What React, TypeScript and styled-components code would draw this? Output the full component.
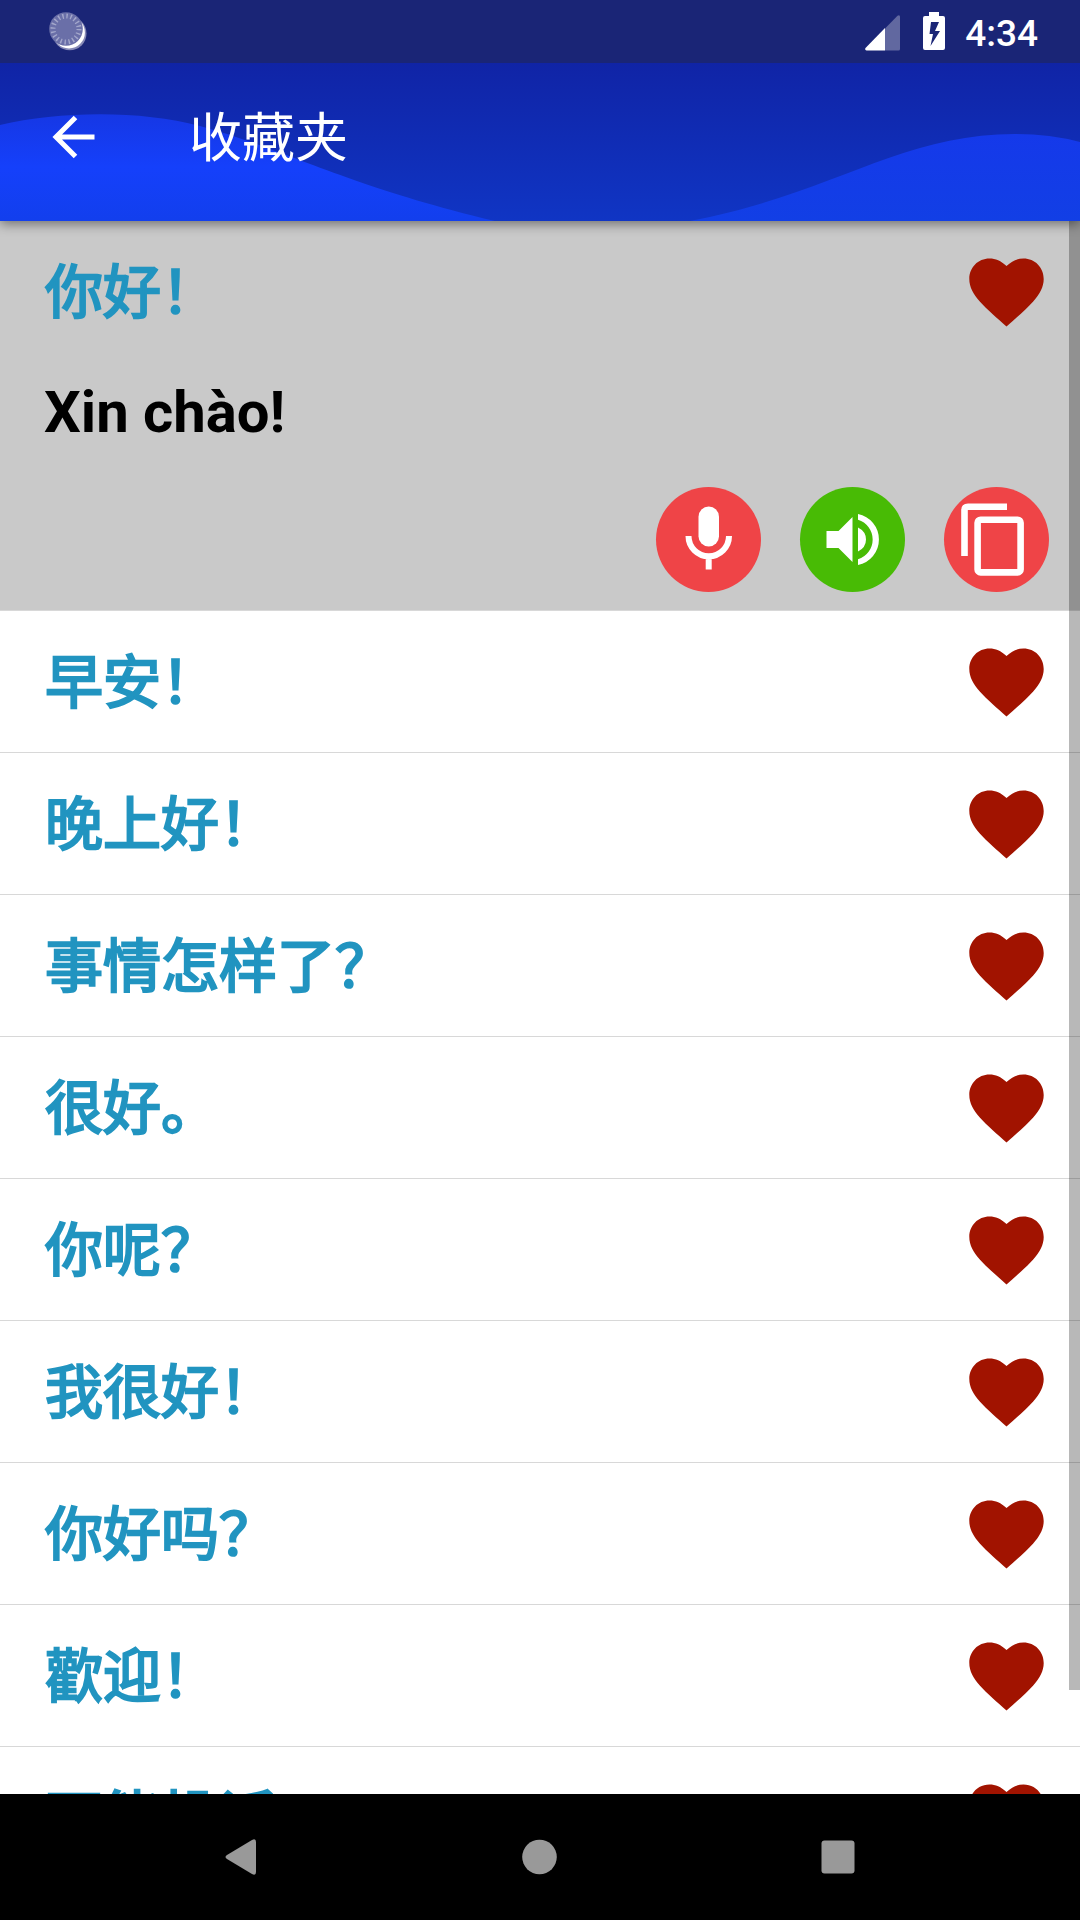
import React from 'react';
import styled, { createGlobalStyle } from 'styled-components';

const Global = createGlobalStyle`
  *, *::before, *::after { box-sizing: border-box; }
  body { margin: 0; background: #fff; }
`;

const cjk = `"Noto Sans CJK SC", sans-serif`;

const Screen = styled.div`
  display: flex;
  flex-direction: column;
  width: 1080px;
  height: 1920px;
  overflow: hidden;
  background: #fff;
  font-family: Roboto, ${cjk};
`;

const StatusBar = styled.header`
  position: relative;
  z-index: 3;
  flex: none;
  display: flex;
  justify-content: space-between;
  height: 63px;
  padding: 0 42px 0 49px;
  background: #1a2576;
`;

const StatusGroup = styled.div`
  display: flex;
  align-items: flex-start;
`;

const Spinner = styled.svg`
  width: 39px;
  height: 40px;
  margin-top: 12px;
`;

const Signal = styled.svg`
  width: 35px;
  height: 36px;
  margin: 15px 23px 0 0;
`;

const Battery = styled.svg`
  width: 22px;
  height: 38px;
  margin: 12px 20px 0 0;
`;

const Clock = styled.span`
  color: #fff;
  font: 500 37px/67px Roboto, sans-serif;
`;

const AppBar = styled.div`
  position: relative;
  z-index: 2;
  flex: none;
  display: flex;
  align-items: center;
  height: 158px;
  padding-left: 52px;
  background: linear-gradient(#1024a6, #1035c4);
  box-shadow: 0 3px 11px rgba(0, 0, 0, 0.45);
`;

const Waves = styled.svg`
  position: absolute;
  inset: 0;
  width: 1080px;
  height: 158px;
`;

const BackButton = styled.button`
  position: relative;
  display: flex;
  width: 44px;
  height: 44px;
  padding: 0;
  margin: -11px 93px 0 0;
  border: 0;
  background: none;
`;

const Title = styled.h1`
  position: relative;
  margin: -16px 0 0;
  color: #fff;
  font: 400 53px/76px ${cjk};
`;

const List = styled.main`
  position: relative;
  flex: 1;
  min-height: 0;
  overflow: hidden;
`;

const Row = styled.section<{ $open?: boolean }>`
  height: ${p => (p.$open ? 390 : 142)}px;
  padding: 0 36px 0 45px;
  background: ${p => (p.$open ? '#c9c9c9' : '#fff')};
  border-bottom: 1px solid #d8d8d8;
`;

const RowHead = styled.div`
  display: flex;
  align-items: center;
  justify-content: space-between;
  height: 141px;
`;

const Phrase = styled.span`
  margin-top: -7px;
  color: #2194c0;
  font: 400 58px/84px ${cjk};
  -webkit-text-stroke: 2.3px #2194c0;
`;

const HeartIcon = styled.svg`
  width: 75px;
  height: 69px;
  margin-top: 1px;
`;

const Translation = styled.p`
  margin: 0 0 0 -1px;
  padding-top: 16px;
  color: #000;
  font: 700 58px/68px Roboto, sans-serif;
`;

const Actions = styled.div`
  display: flex;
  justify-content: flex-end;
  gap: 39px;
  margin: 41px -5px 0 0;
`;

const Round = styled.button<{ $color: string }>`
  width: 105px;
  height: 105px;
  padding: 0;
  border: 0;
  border-radius: 50%;
  background: ${p => p.$color};
  svg { display: block; }
`;

const Scrollbar = styled.div`
  position: absolute;
  top: 0;
  right: 0;
  width: 11px;
  height: 1469px;
  background: rgba(0, 0, 0, 0.28);
`;

const NavBar = styled.nav`
  flex: none;
  height: 126px;
  display: flex;
  align-items: center;
  justify-content: space-between;
  padding: 0 225px;
  background: #000;
`;

const Heart = () => (
  <HeartIcon viewBox="0 0 75 69" fill="#a11300">
    <path d="M37.500 8C32 2.800 26.500 .5 20.500 .5 9 .5 .3 9.500 .3 21c0 8 4 15 10.500 22.500C18 51.500 28.500 60.500 37.500 68.500 46.500 60.500 57 51.500 64.200 43.500 70.700 36 74.700 29 74.700 21 74.700 9.500 66 .5 54.500 .5 48.500 .5 43 2.800 37.500 8Z" />
  </HeartIcon>
);

const phrases = ['早安！', '晚上好！', '事情怎样了？', '很好。', '你呢？', '我很好！', '你好吗？', '歡迎！', '不能投诉。'];

export default function App() {
  return (
    <Screen>
      <Global />
      <StatusBar>
        <StatusGroup>
          <Spinner viewBox="0 0 39 40">
            <circle cx="20.700" cy="21.500" r="16.800" fill="#8689b6" />
            <circle cx="20" cy="20.600" r="15.900" fill="#fff" />
            <circle cx="17" cy="17" r="16.800" fill="#6a6fa8" />
            <circle cx="17" cy="17" r="13" fill="none" stroke="#a3a7cb" strokeWidth="5" strokeDasharray="1.400 2.684" />
          </Spinner>
        </StatusGroup>
        <StatusGroup>
          <Signal viewBox="0 0 35 36">
            <path d="M20 13.500 32.500.8Q35-.5 35 2V34q0 1.500-1.500 1.500H20Z" fill="#6168a0" />
            <path d="M20 13V35.500H1.500Q-.5 35 .5 33Z" fill="#fff" />
          </Signal>
          <Battery viewBox="0 0 22 38">
            <path fill="#fff" fillRule="evenodd" d="M6 0H16V4H20Q22 4 22 6V36Q22 38 20 38H2Q0 38 0 36V6Q0 4 2 4H6ZM8 10 6.500 22H10L7.500 34 17 19H12L16 10Z" />
          </Battery>
          <Clock>4:34</Clock>
        </StatusGroup>
      </StatusBar>
      <AppBar>
        <Waves viewBox="0 0 1080 158">
          <defs>
            <linearGradient id="wave" x1="0" y1="50" x2="0" y2="158" gradientUnits="userSpaceOnUse">
              <stop offset="0" stopColor="#1637e4" />
              <stop offset=".5" stopColor="#1540fb" />
              <stop offset="1" stopColor="#123fed" />
            </linearGradient>
            <linearGradient id="waveRight" x1="0" y1="70" x2="0" y2="158" gradientUnits="userSpaceOnUse">
              <stop offset="0" stopColor="#1539ea" />
              <stop offset="1" stopColor="#123fe5" />
            </linearGradient>
          </defs>
          <path fill="url(#wave)" d="M0 62C60 48 140 47 200 63C290 88 345 122 495 158H0Z" />
          <path fill="url(#waveRight)" d="M690 158C830 132 900 71 1015 71Q1050 71 1080 79V158Z" />
        </Waves>
        <BackButton aria-label="Back">
          <svg width="44" height="44" viewBox="0 0 44 44" fill="none" stroke="#fff" strokeWidth="5">
            <path d="M42.500 22H5M23.500 2.500 4 22 23.500 41.500" />
          </svg>
        </BackButton>
        <Title>收藏夹</Title>
      </AppBar>
      <List>
        <Row $open>
          <RowHead><Phrase>你好！</Phrase><Heart /></RowHead>
          <Translation>Xin chào!</Translation>
          <Actions>
            <Round $color="#ef4447" aria-label="Speak">
              <svg width="105" height="105" viewBox="0 0 105 105">
                <rect x="42.500" y="19.500" width="20.500" height="40" rx="10.250" fill="#fff" />
                <path d="M32.500 49A20.250 20.250 0 0 0 73 49M52.700 69V82.500" fill="none" stroke="#fff" strokeWidth="6" />
              </svg>
            </Round>
            <Round $color="#48bb05" aria-label="Listen">
              <svg width="105" height="105" viewBox="0 0 105 105" fill="#fff">
                <path d="M26.500 44H38.500L52.500 30V75L38.500 61H26.500ZM58 40.500Q66 44.500 66 52.500T58 64.500Z" />
                <path d="M58 27A26 26 0 0 1 58 78V72.300A20.700 20.700 0 0 0 58 32.700Z" />
              </svg>
            </Round>
            <Round $color="#ef4447" aria-label="Copy">
              <svg width="105" height="105" viewBox="0 0 105 105" fill="none" stroke="#fff" strokeWidth="6.600">
                <path d="M63 19.700H24Q20.500 19.700 20.500 23V69" />
                <rect x="33.600" y="32.800" width="43" height="52.600" rx="3" />
              </svg>
            </Round>
          </Actions>
        </Row>
        {phrases.map(p => (
          <Row key={p}><RowHead><Phrase>{p}</Phrase><Heart /></RowHead></Row>
        ))}
        <Scrollbar />
      </List>
      <NavBar>
        <svg width="32" height="36" viewBox="0 0 32 36"><path d="M27 1Q31-1 31 3V33Q31 37 27 35L2 20Q-1 18 2 16Z" fill="#999" /></svg>
        <svg width="36" height="36"><circle cx="18.500" cy="18" r="17.300" fill="#999" /></svg>
        <svg width="34" height="34"><rect x=".5" y=".5" width="33" height="33" rx="3" fill="#999" /></svg>
      </NavBar>
    </Screen>
  );
}
